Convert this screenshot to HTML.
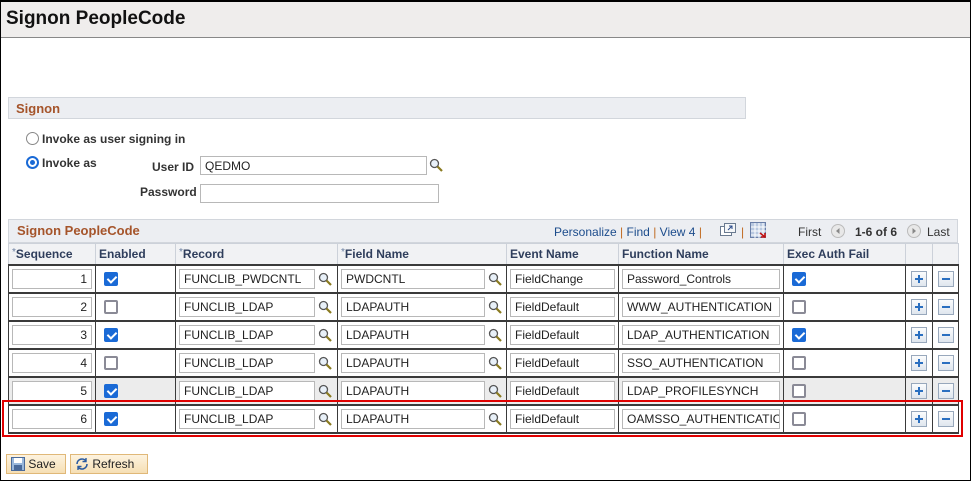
<!DOCTYPE html>
<html><head><meta charset="utf-8"><style>
*{box-sizing:border-box;margin:0;padding:0}
body{width:972px;height:482px;background:#fff;font-family:"Liberation Sans",Arial,sans-serif;font-size:12px;color:#333;position:relative;overflow:hidden}
.a{position:absolute}
.frame{left:0;top:0;width:971px;height:481px;border:1px solid #000;border-top:2px solid #000}
.hdr{left:1px;top:2px;width:969px;height:36px;background:#efedec;border-bottom:1px solid #888}
.hdr span{position:absolute;left:5px;top:6px;font-size:19px;font-weight:bold;color:#111}
.sec{background:#eceef2;border:1px solid #d2d6dc}
.sec b{position:absolute;left:7px;top:3px;font-size:13px;color:#a5542a}
.lbl{font-weight:bold;color:#333;font-size:12px}
.inp{border:1px solid #b8b8b8;background:#fff;height:19px;font-size:12px;padding:2px 4px;color:#222;white-space:nowrap;overflow:hidden}
.mag{width:14px;height:14px}
.radio{width:13px;height:13px;border-radius:50%;border:1.5px solid #888;background:#fff}
.radio.on{border:2px solid #1a6ad6}
.radio.on:after{content:"";position:absolute;left:2px;top:2px;width:5px;height:5px;border-radius:50%;background:#1a6ad6}
table{position:absolute;left:8px;top:243px;border-collapse:collapse;table-layout:fixed;width:950px}
th{height:21px;border:1px solid #ccd1d9;background:#f1f2f4;color:#2f3e5c;font-size:12px;text-align:left;padding-left:3px;font-weight:bold}
th i{color:#6a7fa0;font-style:normal;font-weight:normal;font-size:10px;vertical-align:top}
td{height:28px;border:2px solid #3a3a3a;border-width:2px 1px;padding:0 3px;position:relative;background:#fff;white-space:nowrap;overflow:hidden}
tr.g td{background:#ececec}
td .inp{height:20px;padding:2px 4px;display:inline-block;vertical-align:middle}
td .mag{vertical-align:middle;margin-left:3px}
.cb{width:14px;height:14px;border-radius:2px;border:2px solid #8a8a96;background:#fff;margin-left:5px}
.cb.on{background:#1a6ad6;border-color:#1a6ad6;position:relative}
.cb.on:after{content:"";position:absolute;left:3px;top:0px;width:4px;height:7px;border:solid #fff;border-width:0 2px 2px 0;transform:rotate(45deg)}
.pm{width:16px;height:16px;border:1px solid #98a8bc;background:linear-gradient(#fbfcfd,#dfe6ee);position:relative;margin:0 auto}
.pm:before{content:"";position:absolute;left:3px;top:6px;width:8px;height:2px;background:#2a6fc0}
.pm.p:after{content:"";position:absolute;left:6px;top:3px;width:2px;height:8px;background:#2a6fc0}
.btn{height:20px;border:1px solid #e0b878;background:linear-gradient(#fdf3df,#f6dfb4);font-size:12px;color:#222;padding:2px 4px}
a{color:#1c4c8c;text-decoration:none}
.bar{color:#c06a20}
</style></head><body>
<div class="a frame"></div>
<div class="a hdr"><span>Signon PeopleCode</span></div>

<div class="a sec" style="left:8px;top:97px;width:738px;height:22px"><b>Signon</b></div>
<div class="a radio" style="left:26px;top:132px"></div>
<div class="a lbl" style="left:42px;top:132px">Invoke as user signing in</div>
<div class="a radio on" style="left:26px;top:156px"></div>
<div class="a lbl" style="left:42px;top:156px">Invoke as</div>
<div class="a lbl" style="left:152px;top:160px">User ID</div>
<div class="a inp" style="left:200px;top:156px;width:227px">QEDMO</div>
<svg class="a mag" style="left:429px;top:158px" viewBox="0 0 14 14"><circle cx="5.5" cy="5.5" r="4" fill="#e8f0f8" stroke="#555" stroke-width="1.3"/><line x1="8.5" y1="8.5" x2="13" y2="13" stroke="#8a7a20" stroke-width="2.2"/></svg>
<div class="a lbl" style="left:140px;top:185px">Password</div>
<div class="a inp" style="left:200px;top:184px;width:239px"></div>

<div class="a sec" style="left:8px;top:219px;width:950px;height:24px"><b style="top:3px;left:8px">Signon PeopleCode</b>
<div class="a" style="left:545px;top:5px;font-size:12px;white-space:nowrap"><a>Personalize</a> <span class="bar">|</span> <a>Find</a> <span class="bar">|</span> <a>View 4</a> <span class="bar">|</span></div>
<svg class="a" style="left:711px;top:3px" width="16" height="14" viewBox="0 0 16 14"><rect x="0.5" y="3.5" width="11" height="9" fill="#fff" stroke="#6a7a90"/><rect x="4.5" y="0.5" width="11" height="9" fill="#f4f6f8" stroke="#6a7a90"/><path d="M8 7 L12 3 M9 3h3v3" stroke="#2a4a8a" fill="none"/></svg>
<div class="a bar" style="left:732px;top:5px">|</div>
<svg class="a" style="left:741px;top:2px" width="17" height="17" viewBox="0 0 17 17"><rect x="0.5" y="0.5" width="15" height="15" fill="#b8c8e0" stroke="#6a7fa8"/><path d="M1 5h15M1 9h15M1 13h15M5 1v15M9 1v15M13 1v15" stroke="#fff"/><path d="M10 11l5 4M15 11v4h-4" stroke="#c01010" stroke-width="1.6" fill="none"/></svg>
<div class="a" style="left:789px;top:5px;color:#333">First</div>
<svg class="a" style="left:822px;top:4px" width="14" height="14"><circle cx="7" cy="7" r="6.5" fill="#e8e8e8" stroke="#bbb"/><path d="M8.5 4v6L5 7z" fill="#888"/></svg>
<div class="a" style="left:846px;top:5px;font-weight:bold;color:#333">1-6 of 6</div>
<svg class="a" style="left:898px;top:4px" width="14" height="14"><circle cx="7" cy="7" r="6.5" fill="#e8e8e8" stroke="#bbb"/><path d="M5.5 4v6L9 7z" fill="#888"/></svg>
<div class="a" style="left:918px;top:5px;color:#333">Last</div>
</div>

<svg width="0" height="0" style="position:absolute"><defs><g id="m"><circle cx="5.5" cy="5.5" r="4" fill="#e8f0f8" stroke="#555" stroke-width="1.3"/><line x1="8.5" y1="8.5" x2="13" y2="13" stroke="#8a7a20" stroke-width="2.2"/></g></defs></svg>
<table>
<colgroup><col style="width:87px"><col style="width:80px"><col style="width:162px"><col style="width:169px"><col style="width:112px"><col style="width:165px"><col style="width:122px"><col style="width:27px"><col style="width:26px"></colgroup>
<tr><th><i>*</i>Sequence</th><th>Enabled</th><th><i>*</i>Record</th><th><i>*</i>Field Name</th><th>Event Name</th><th>Function Name</th><th>Exec Auth Fail</th><th></th><th></th></tr>
<tr><td><div class="inp" style="width:80px;text-align:right">1</div></td><td><div class="cb on"></div></td><td><div class="inp" style="width:136px">FUNCLIB_PWDCNTL</div><svg class="mag" viewBox="0 0 14 14"><use href="#m"/></svg></td><td><div class="inp" style="width:144px">PWDCNTL</div><svg class="mag" viewBox="0 0 14 14"><use href="#m"/></svg></td><td><div class="inp" style="width:105px">FieldChange</div></td><td><div class="inp" style="width:158px">Password_Controls</div></td><td><div class="cb on"></div></td><td><div class="pm p"></div></td><td><div class="pm"></div></td></tr>
<tr><td><div class="inp" style="width:80px;text-align:right">2</div></td><td><div class="cb"></div></td><td><div class="inp" style="width:136px">FUNCLIB_LDAP</div><svg class="mag" viewBox="0 0 14 14"><use href="#m"/></svg></td><td><div class="inp" style="width:144px">LDAPAUTH</div><svg class="mag" viewBox="0 0 14 14"><use href="#m"/></svg></td><td><div class="inp" style="width:105px">FieldDefault</div></td><td><div class="inp" style="width:158px">WWW_AUTHENTICATION</div></td><td><div class="cb"></div></td><td><div class="pm p"></div></td><td><div class="pm"></div></td></tr>
<tr><td><div class="inp" style="width:80px;text-align:right">3</div></td><td><div class="cb on"></div></td><td><div class="inp" style="width:136px">FUNCLIB_LDAP</div><svg class="mag" viewBox="0 0 14 14"><use href="#m"/></svg></td><td><div class="inp" style="width:144px">LDAPAUTH</div><svg class="mag" viewBox="0 0 14 14"><use href="#m"/></svg></td><td><div class="inp" style="width:105px">FieldDefault</div></td><td><div class="inp" style="width:158px">LDAP_AUTHENTICATION</div></td><td><div class="cb on"></div></td><td><div class="pm p"></div></td><td><div class="pm"></div></td></tr>
<tr><td><div class="inp" style="width:80px;text-align:right">4</div></td><td><div class="cb"></div></td><td><div class="inp" style="width:136px">FUNCLIB_LDAP</div><svg class="mag" viewBox="0 0 14 14"><use href="#m"/></svg></td><td><div class="inp" style="width:144px">LDAPAUTH</div><svg class="mag" viewBox="0 0 14 14"><use href="#m"/></svg></td><td><div class="inp" style="width:105px">FieldDefault</div></td><td><div class="inp" style="width:158px">SSO_AUTHENTICATION</div></td><td><div class="cb"></div></td><td><div class="pm p"></div></td><td><div class="pm"></div></td></tr>
<tr class="g"><td><div class="inp" style="width:80px;text-align:right">5</div></td><td><div class="cb on"></div></td><td><div class="inp" style="width:136px">FUNCLIB_LDAP</div><svg class="mag" viewBox="0 0 14 14"><use href="#m"/></svg></td><td><div class="inp" style="width:144px">LDAPAUTH</div><svg class="mag" viewBox="0 0 14 14"><use href="#m"/></svg></td><td><div class="inp" style="width:105px">FieldDefault</div></td><td><div class="inp" style="width:158px">LDAP_PROFILESYNCH</div></td><td><div class="cb"></div></td><td><div class="pm p"></div></td><td><div class="pm"></div></td></tr>
<tr><td><div class="inp" style="width:80px;text-align:right">6</div></td><td><div class="cb on"></div></td><td><div class="inp" style="width:136px">FUNCLIB_LDAP</div><svg class="mag" viewBox="0 0 14 14"><use href="#m"/></svg></td><td><div class="inp" style="width:144px">LDAPAUTH</div><svg class="mag" viewBox="0 0 14 14"><use href="#m"/></svg></td><td><div class="inp" style="width:105px">FieldDefault</div></td><td><div class="inp" style="width:158px">OAMSSO_AUTHENTICATION</div></td><td><div class="cb"></div></td><td><div class="pm p"></div></td><td><div class="pm"></div></td></tr>
</table>
<div class="a" style="left:2px;top:400px;width:961px;height:37px;border:2px solid #e00000"></div>

<div class="a btn" style="left:6px;top:454px;width:60px"><svg style="vertical-align:-3px" width="14" height="14" viewBox="0 0 14 14"><rect x="0.5" y="0.5" width="13" height="13" fill="#9ab8dc" stroke="#4a6a9a"/><rect x="3" y="1" width="8" height="5" fill="#fff"/><rect x="3" y="8" width="8" height="5" fill="#4a6a9a"/></svg> Save</div>
<div class="a btn" style="left:70px;top:454px;width:78px"><svg style="vertical-align:-3px" width="14" height="14" viewBox="0 0 14 14"><path d="M2 7a5 5 0 0 1 9-3M12 7a5 5 0 0 1-9 3" stroke="#2a5aa0" stroke-width="1.6" fill="none"/><path d="M11 1v3.5H7.5M3 13V9.5h3.5" stroke="#2a5aa0" stroke-width="1.4" fill="none"/></svg> Refresh</div>
</body></html>
